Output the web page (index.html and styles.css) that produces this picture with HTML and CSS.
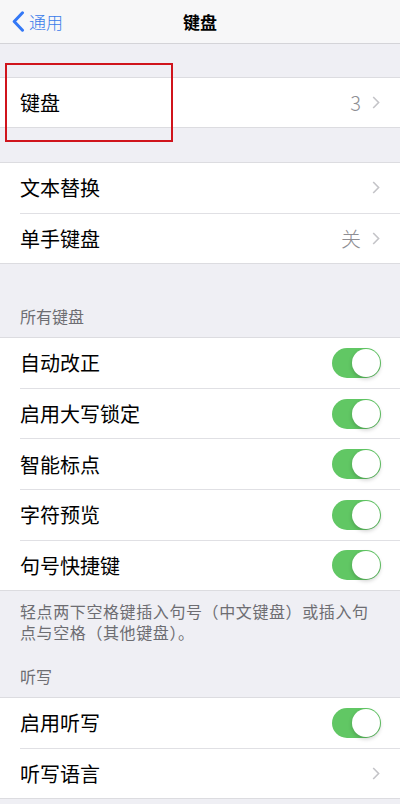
FILE: index.html
```html
<!DOCTYPE html>
<html lang="zh-CN">
<head>
    <meta charset="UTF-8">
    <meta name="viewport" content="width=device-width, initial-scale=1.0">
    <link rel="stylesheet" href="styles.css">
    <title>键盘</title>
</head>
<body>
    <div class="nav">
        <div class="back">
            <svg class="back-icon" width="13" height="21" viewBox="0 0 13 21">
                <path d="M10.5 1.8 L2.2 10.5 L10.5 19.2" fill="none" stroke="#3478f6" stroke-width="3" stroke-linecap="round" stroke-linejoin="round"/>
            </svg>
            <span>通用</span>
        </div>
        <div class="title">键盘</div>
    </div>

    <div class="gap-top"></div>

    <div class="group">
        <div class="row">
            <span class="label">键盘</span>
            <span class="value">3</span>
            <svg class="chev" width="8" height="13" viewBox="0 0 8 13"><path d="M1.2 1 L6.6 6.5 L1.2 12" fill="none" stroke="#c4c4c8" stroke-width="1.6"/></svg>
        </div>
    </div>

    <div class="gap-mid"></div>

    <div class="group">
        <div class="row">
            <span class="label">文本替换</span>
            <svg class="chev" width="8" height="13" viewBox="0 0 8 13"><path d="M1.2 1 L6.6 6.5 L1.2 12" fill="none" stroke="#c4c4c8" stroke-width="1.6"/></svg>
        </div>
        <div class="row">
            <span class="label">单手键盘</span>
            <span class="value">关</span>
            <svg class="chev" width="8" height="13" viewBox="0 0 8 13"><path d="M1.2 1 L6.6 6.5 L1.2 12" fill="none" stroke="#c4c4c8" stroke-width="1.6"/></svg>
        </div>
    </div>

    <div class="section-header">所有键盘</div>

    <div class="group">
        <div class="row">
            <span class="label">自动改正</span>
            <span class="toggle"><span class="knob"></span></span>
        </div>
        <div class="row">
            <span class="label">启用大写锁定</span>
            <span class="toggle"><span class="knob"></span></span>
        </div>
        <div class="row">
            <span class="label">智能标点</span>
            <span class="toggle"><span class="knob"></span></span>
        </div>
        <div class="row">
            <span class="label">字符预览</span>
            <span class="toggle"><span class="knob"></span></span>
        </div>
        <div class="row">
            <span class="label">句号快捷键</span>
            <span class="toggle"><span class="knob"></span></span>
        </div>
    </div>

    <div class="section-footer">轻点两下空格键插入句号（中文键盘）或插入句点与空格（其他键盘）。</div>

    <div class="section-header short">听写</div>

    <div class="group">
        <div class="row">
            <span class="label">启用听写</span>
            <span class="toggle"><span class="knob"></span></span>
        </div>
        <div class="row">
            <span class="label">听写语言</span>
            <svg class="chev" width="8" height="13" viewBox="0 0 8 13"><path d="M1.2 1 L6.6 6.5 L1.2 12" fill="none" stroke="#c4c4c8" stroke-width="1.6"/></svg>
        </div>
    </div>

    <!-- annotation box -->
    <div class="highlight"></div>
</body>
</html>
```

FILE: styles.css
```css
body {
    margin: 0;
    background: #efeff4;
    font-family: "Noto Sans CJK SC", "Noto Sans", sans-serif;
    color: #000;
    width: 400px;
    position: relative;
}

.nav {
    height: 43px;
    background: #f7f7f8;
    border-bottom: 1px solid #d4d4d8;
    display: flex;
    align-items: center;
    justify-content: center;
    position: relative;
}

.back {
    position: absolute;
    left: 12px;
    top: 0;
    height: 43px;
    display: flex;
    align-items: center;
    gap: 4px;
    color: #3a7bea;
    font-size: 17px;
    font-weight: 300;
}

.title {
    font-size: 17px;
    font-weight: 600;
}

.gap-top {
    height: 33px;
}

.gap-mid {
    height: 34px;
}

.group {
    background: #fff;
    border-top: 1px solid #dcdce0;
    border-bottom: 1px solid #dcdce0;
}

.row {
    height: 49.6px;
    margin-left: 20px;
    padding-right: 20px;
    display: flex;
    align-items: center;
    border-bottom: 1px solid #e0e0e4;
}

.row:last-child {
    border-bottom: none;
}

.group .row:first-child:last-child {
    height: 49px;
}

.label {
    flex: 1;
    font-size: 20px;
}

.value {
    font-size: 20px;
    font-weight: 300;
    color: #8e8e93;
    margin-right: 11px;
}

.chev {
    display: block;
}

.toggle {
    width: 49px;
    height: 30px;
    border-radius: 15px;
    background: #61c764;
    position: relative;
    margin-right: -1px;
}

.knob {
    position: absolute;
    right: 1px;
    top: 1px;
    width: 28px;
    height: 28px;
    border-radius: 50%;
    background: #fff;
    box-shadow: 0 2px 4px rgba(0, 0, 0, 0.2);
}

.section-header {
    height: 73px;
    display: flex;
    align-items: flex-end;
    padding: 0 20px 9px;
    box-sizing: border-box;
    font-size: 16px;
    color: #6d6d72;
}

.section-header.short {
    height: 46px;
}

.section-footer {
    padding: 10px 20px 0;
    font-size: 16px;
    line-height: 21px;
    color: #6d6d72;
    height: 50px;
    letter-spacing: 0.6px;
}

.highlight {
    position: absolute;
    left: 5px;
    top: 63px;
    width: 164px;
    height: 75px;
    border: 2px solid #d0141c;
}
```
